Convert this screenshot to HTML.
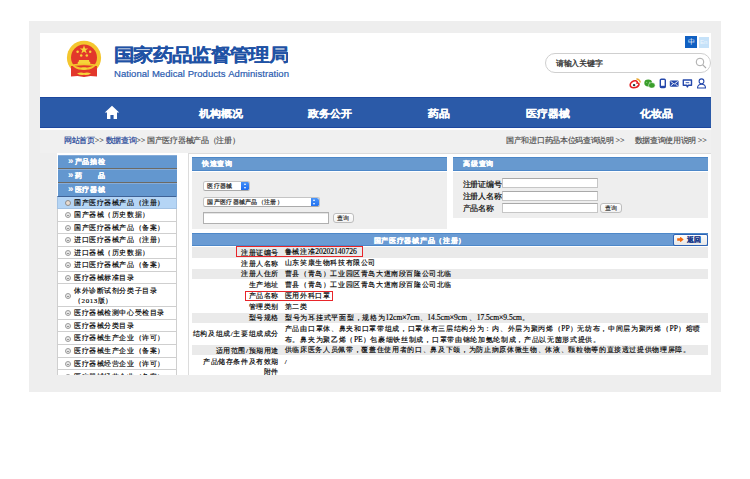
<!DOCTYPE html>
<html><head><meta charset="utf-8">
<style>
*{margin:0;padding:0;box-sizing:border-box}
html,body{width:750px;height:479px;overflow:hidden;background:#fff}
body{position:relative;font-family:"Liberation Serif",serif;color:#333;text-spacing-trim:space-all;font-kerning:none}
.a{position:absolute}
.s{font-family:"Liberation Sans",sans-serif}
.nw{white-space:nowrap}
#frame{left:28.8px;top:21px;width:692.2px;height:370.6px;background:#eeeeee}
#hdr{left:40px;top:33px;width:671px;height:64px;background:#fff}
#nav{left:40px;top:97px;width:671px;height:31px;background:#2b5aa8;border-top:1px solid #1c479e;border-bottom:1px solid #1c479e}
#navline{left:40px;top:128px;width:671px;height:1.5px;background:#fdfdfd}
#bc{left:40px;top:129.5px;width:671px;height:23.5px;background:#f0f0f0}
.nt{position:absolute;top:105.6px;height:14px;line-height:14px;transform:scaleY(0.92);transform-origin:0 50%;color:#fff;font-weight:bold;font-size:11px;letter-spacing:0px;white-space:nowrap;-webkit-text-stroke:0.25px #fff}
.bcx{font-size:8px;letter-spacing:-0.3px;line-height:11px;color:#4a4a4a;white-space:nowrap;-webkit-text-stroke:0.15px #4a4a4a}
.lnk{color:#2a4a9a;-webkit-text-stroke:0.2px #2a4a9a}
.gt{letter-spacing:0;font-size:8px}
.sb{position:absolute;left:0.5px;width:119.5px;height:14px;background:#6397cf;border-top:1.2px solid #85acd9;border-bottom:1.5px solid #6c6a64;color:#fff;font-weight:bold;font-size:7px;letter-spacing:0.6px;line-height:9.5px;padding-left:10.5px;white-space:nowrap;-webkit-text-stroke:0.2px #fff}
.si{position:absolute;left:0;width:120px;background:#fff;border:1px solid #cfcfcf;border-top:none;color:#000;font-size:7px;letter-spacing:0.58px;line-height:11.5px;padding-left:16px;padding-top:1.2px;white-space:nowrap;-webkit-text-stroke:0.15px #000}
.si.hl{background:#b5d5f5;border-color:#a3c2e3;border-top:1.2px solid #3f6296}
.si.two{line-height:10.6px;padding-top:1.3px}
.bu{position:absolute;left:7.2px;top:3.3px;width:6px;height:6px;border-radius:50%;border:0.9px solid #9c9c9c;background:#e8e8e8}
.hl .bu{background:#eadccf;border-color:#8c8c8c}
.hl .bu:after{display:none}
.bu:after{content:"";position:absolute;left:1px;right:1px;top:2px;height:0.8px;background:#999}
.ph{height:13.6px;background:#6799cf;border-top:1px solid #4c87c8;border-bottom:1px solid #4c87c8;color:#fff;font-weight:bold;font-size:7px;letter-spacing:0.65px;line-height:11.6px;padding-left:10.5px;white-space:nowrap;-webkit-text-stroke:0.2px #fff}
.pb{background:#eeeeee}
.sel{background:#fff;border:0.7px solid #c4c4c4;border-bottom-color:#aaa;border-radius:2.5px;font-size:6px;letter-spacing:0.3px;font-weight:bold;line-height:9px;padding-left:3.6px;color:#333;white-space:nowrap;overflow:hidden}
.ar{position:absolute;right:-0.7px;top:-0.7px;bottom:-0.7px;width:8.6px;background:linear-gradient(#4b95f8,#1c6cf0);border-radius:0 2.5px 2.5px 0}
.ar:before,.ar:after{content:"";position:absolute;left:2.6px;border-left:1.6px solid transparent;border-right:1.6px solid transparent}
.ar:before{top:1.6px;border-bottom:2px solid #fff}
.ar:after{bottom:1.6px;border-top:2px solid #fff}
.inp{background:#fff;border:0.8px solid #c6c6c6;border-top-color:#a9a9a9}
.btn{background:linear-gradient(#fff,#f2f2f2);border:0.8px solid #bdbdbd;border-radius:3px;font-size:6px;line-height:7.3px;text-align:center;color:#222;-webkit-text-stroke:0.1px #222}
.lbl{font-size:8px;letter-spacing:-0.1px;line-height:10px;color:#000;white-space:nowrap;-webkit-text-stroke:0.15px #000}
.rh{background:#6a9bd3;border-top:1px solid #4d88c9;border-bottom:1px solid #4d88c9}
.rht{color:#fff;font-weight:bold;font-size:7px;letter-spacing:0.72px;line-height:11px;white-space:nowrap;-webkit-text-stroke:0.2px #fff}
.back{background:linear-gradient(#fdfdfd,#e6e6e6);border:1.4px solid #2c62b4;border-radius:2px;color:#1a3a8a;font-weight:bold;font-size:7px;letter-spacing:0.4px;line-height:10px;padding-left:13px;white-space:nowrap;-webkit-text-stroke:0.2px #1a3a8a}
.arw{position:absolute;left:3.2px;top:2px;width:6.5px;height:5.8px;background:#f26a10;clip-path:polygon(0 30%,45% 30%,45% 0,100% 50%,45% 100%,45% 70%,0 70%)}
.tl{left:191.5px;width:87.5px;display:flex;align-items:center;justify-content:flex-end;text-align:right;font-size:7px;letter-spacing:0.6px;line-height:10.5px;padding-top:1.2px;color:#000;-webkit-text-stroke:0.15px #000;white-space:nowrap}
.tv{left:284.8px;width:425px;display:flex;align-items:center;font-size:7px;letter-spacing:0.6px;line-height:10.8px;padding-top:1.2px;color:#000;-webkit-text-stroke:0.15px #000;white-space:nowrap}
.rq{font-size:9.5px;letter-spacing:0;position:relative;top:0.8px;-webkit-text-stroke:0.1px #fff}
.ls0{letter-spacing:0;font-size:7.56px}
.rb{border:1.2px solid #e8252a}
</style></head><body>
<div id="frame" class="a"></div><div id="hdr" class="a"></div><div id="nav" class="a"></div><div id="navline" class="a"></div><div id="bc" class="a"></div>
<svg class="a" style="left:60px;top:36px" width="48" height="46" viewBox="60 36 48 46">
  <circle cx="84" cy="57.8" r="17.1" fill="#f4c62e"/>
  <circle cx="84" cy="57.6" r="13" fill="#e2372b"/>
  <path d="M71 66 L97 66 L97 76.5 L90.5 76 L84 77 L77.5 76 L71 76.5 Z" fill="#e2372b"/>
  <polygon points="84,45.3 85.1,48.4 88.3,48.4 85.7,50.3 86.7,53.4 84,51.5 81.3,53.4 82.3,50.3 79.7,48.4 82.9,48.4" fill="#f6d43a"/>
  <circle cx="77.6" cy="51.7" r="1.25" fill="#f6d43a"/>
  <circle cx="90.2" cy="51.7" r="1.25" fill="#f6d43a"/>
  <circle cx="81.2" cy="55.5" r="1.25" fill="#f6d43a"/>
  <circle cx="86.8" cy="55.5" r="1.25" fill="#f6d43a"/>
  <path d="M79 60 L89 60 L89.3 61.8 L90.2 62 L90.2 64.8 L77.8 64.8 L77.8 62 L78.7 61.8 Z" fill="#f6d43a"/>
  <path d="M71.5 64.5 Q84 62.5 96.5 64.5 Q92 70.5 84 69.6 Q76 70.5 71.5 64.5 Z M74.5 65.8 Q84 70 93.5 65.8 Q84 64.8 74.5 65.8 Z" fill="#f4c62e" fill-rule="evenodd"/>
  <ellipse cx="84" cy="68.6" rx="3" ry="1.4" fill="#f6d43a"/>
  <path d="M77 73.5 Q80.5 71.8 84 73 Q87.5 71.8 91 73.5 Q87.5 75.8 84 74.8 Q80.5 75.8 77 73.5 Z" fill="#f6d43a"/>
</svg>
<div id="title" class="a s nw" style="left:114px;top:43.8px;font-weight:bold;font-size:20px;letter-spacing:-0.67px;line-height:24px;color:#1f52a5;-webkit-text-stroke:0.2px #1f52a5;transform:scaleY(0.875);transform-origin:0 0">国家药品监督管理局</div>
<div id="entitle" class="a s nw" style="left:114px;top:67.9px;font-size:9.5px;letter-spacing:0.045px;line-height:12px;color:#2b5cb0;-webkit-text-stroke:0.2px #2b5cb0">National Medical Products Administration</div>
<div class="a s" style="left:685px;top:36.4px;width:12px;height:12px;background:#1060c2;color:#fff;font-size:7px;line-height:12px;text-align:center">中</div>
<div class="a s" style="left:698.6px;top:36.9px;width:10.2px;height:11.1px;background:#c6e2f9;color:#eef6fd;font-size:6px;line-height:11.1px;text-align:center">En</div>
<div class="a" style="left:545px;top:53px;width:166px;height:20px;border:1.1px solid #cfcfcf;border-radius:10px;background:#fff"></div>
<div class="a s nw" style="left:556px;top:58.7px;font-size:8px;letter-spacing:-0.3px;line-height:10px;color:#2a2a2a;-webkit-text-stroke:0.25px #2a2a2a">请输入关键字</div>
<svg class="a" style="left:695px;top:57px" width="12" height="12" viewBox="0 0 12 12"><circle cx="5" cy="5" r="3.8" fill="none" stroke="#aaa" stroke-width="1"/><path d="M7.8 7.8 L11 11" stroke="#aaa" stroke-width="1.1"/></svg>
<svg class="a" style="left:628px;top:78px" width="80" height="11" viewBox="0 0 80 11">
  <path d="M2.2 6.8 C2.2 4.4 5.2 2.6 7.6 2.8 C9.2 3 9.4 4.2 9.2 5 C10.6 4.9 11.4 5.9 10.8 7.2 C10 9 7.6 9.8 5.6 9.8 C3.4 9.8 2.2 8.5 2.2 6.8 Z" fill="#fff" stroke="#e41e20" stroke-width="1.6"/>
  <ellipse cx="6.1" cy="7" rx="2.9" ry="1.6" fill="#fff"/>
  <circle cx="6.1" cy="7.1" r="1.2" fill="#1f3b3a"/>
  <path d="M8.4 1 A3.6 3.6 0 0 1 12.2 4.6" stroke="#eaa830" stroke-width="1.5" fill="none"/>
  <ellipse cx="20.2" cy="5" rx="3.9" ry="3.4" fill="#3a9f2c"/>
  <ellipse cx="23.8" cy="7.3" rx="3.3" ry="2.8" fill="#3a9f2c" stroke="#fff" stroke-width="0.5"/>
  <circle cx="18.8" cy="4.2" r="0.45" fill="#dff0d8"/><circle cx="21.4" cy="4.2" r="0.45" fill="#dff0d8"/>
  <rect x="32.3" y="1.2" width="5" height="8.4" rx="1" fill="none" stroke="#2548ab" stroke-width="1.4"/>
  <rect x="32.3" y="7.8" width="5" height="1.8" fill="#2548ab"/>
  <rect x="41.8" y="2.5" width="8.8" height="6.2" rx="1" fill="#2548ab"/>
  <path d="M42.6 3.4 L46.2 6.1 L49.8 3.4 M42.6 8 L45 6 M49.8 8 L47.4 6" stroke="#fff" stroke-width="0.9" fill="none"/>
  <path d="M55.3 2 H63.5 V7.2 H60.3 L59.4 8.9 L58.5 7.2 H55.3 Z" fill="#fff" stroke="#2548ab" stroke-width="1.4" stroke-linejoin="round"/>
  <path d="M57.6 4.7 H61.2" stroke="#2548ab" stroke-width="0.9"/>
  <circle cx="73.5" cy="3.3" r="2.4" fill="none" stroke="#2548ab" stroke-width="1.1"/>
  <path d="M69.5 10 C69.5 7.4 71.3 6.3 73.5 6.3 C75.7 6.3 77.5 7.4 77.5 10 Z" fill="none" stroke="#2548ab" stroke-width="1.1" stroke-linejoin="round"/>
</svg>
<svg class="a" style="left:104px;top:105px" width="16" height="15" viewBox="0 0 16 15"><path d="M8 0.8 L15.2 7.5 L13 7.5 L13 14 L9.6 14 L9.6 10 L6.4 10 L6.4 14 L3 14 L3 7.5 L0.8 7.5 Z" fill="#fff"/></svg>
<div class="nt" style="left:199px">机构概况</div>
<div class="nt" style="left:307.5px">政务公开</div>
<div class="nt" style="left:428px">药品</div>
<div class="nt" style="left:526px">医疗器械</div>
<div class="nt" style="left:639.6px">化妆品</div>
<div class="a bcx" style="left:64px;top:135px"><span class="lnk">网站首页</span><span class="gt">&gt;&gt;</span> <span class="lnk">数据查询</span><span class="gt">&gt;&gt;</span> 国产医疗器械产品（注册）</div>
<div class="a bcx" style="left:506px;top:135px">国产和进口药品本位码查询说明 <span class="gt">&gt;&gt;</span></div>
<div class="a bcx" style="left:634.5px;top:135px">数据查询使用说明 <span class="gt">&gt;&gt;</span></div>
<div class="a" style="left:0;top:0;width:711px;height:375px;overflow:hidden">
<div class="a" style="left:57px;top:153px;width:700px;height:230px;background:#fff"></div>
<div class="a" style="left:188px;top:153px;width:530px;height:230px;border:1px solid #dcdcdc;background:#fff"></div>
<div class="a ph s" style="left:191.5px;top:157px;width:255.5px">快速查询</div>
<div class="a pb" style="left:191.5px;top:172px;width:255.3px;height:57px"></div>
<div class="a sel s" style="left:202.8px;top:180.8px;width:47.6px;height:10px">医疗器械<b class="ar"></b></div>
<div class="a sel s" style="left:202.8px;top:197.4px;width:116.8px;height:10px">国产医疗器械产品（注册）<b class="ar"></b></div>
<div class="a inp" style="left:202.5px;top:212.2px;width:126.3px;height:11.6px;border-color:#b0b0b0;box-shadow:inset 0 0.6px 0.6px #ccc"></div>
<div class="a btn s" style="left:332.8px;top:213.4px;width:20.8px;height:9.6px;line-height:8.6px">查询</div>
<div class="a ph s" style="left:452.8px;top:157px;width:255.5px">高级查询</div>
<div class="a pb" style="left:452.8px;top:172px;width:255.5px;height:45.6px"></div>
<div class="a lbl" style="left:462.5px;top:179.8px">注册证编号</div>
<div class="a lbl" style="left:462.5px;top:191.6px">注册人名称</div>
<div class="a lbl" style="left:462.5px;top:204px">产品名称</div>
<div class="a inp" style="left:502.2px;top:178px;width:95.4px;height:10px"></div>
<div class="a inp" style="left:502.2px;top:190.7px;width:95.4px;height:10px"></div>
<div class="a inp" style="left:502.2px;top:203.3px;width:95.4px;height:10px"></div>
<div class="a btn s" style="left:599.5px;top:203.1px;width:22.5px;height:10.4px;line-height:9px">查询</div>
<div class="a rh" style="left:191.5px;top:233.3px;width:516.5px;height:13.2px"></div>
<div class="a rht s" style="left:373.5px;top:234.5px">国产医疗器械产品（注册）</div>
<div class="a back s" style="left:673px;top:233.6px;width:34.8px;height:12.2px"><i class="arw"></i>返回</div>
<div class="a" style="left:191.5px;top:246.75px;width:516.5px;height:11.0px;background:#eaeaea"></div>
<div class="a" style="left:191.5px;top:268.6px;width:516.5px;height:10.65px;background:#eaeaea"></div>
<div class="a" style="left:191.5px;top:312.75px;width:516.5px;height:10.35px;background:#eaeaea"></div>
<div class="a" style="left:191.5px;top:345.0px;width:516.5px;height:10.3px;background:#eaeaea"></div>
<div class="a tl" style="top:246.75px;height:11.0px;"><div>注册证编号</div></div>
<div class="a tv" style="top:246.75px;height:11.0px;"><div>鲁械注准<span class=ls0>20202140726</span></div></div>
<div class="a tl" style="top:257.75px;height:10.85px;"><div>注册人名称</div></div>
<div class="a tv" style="top:257.75px;height:10.85px;"><div>山东笑康生物科技有限公司</div></div>
<div class="a tl" style="top:268.6px;height:10.65px;"><div>注册人住所</div></div>
<div class="a tv" style="top:268.6px;height:10.65px;"><div>曹县（青岛）工业园区青岛大道南段百隆公司北临</div></div>
<div class="a tl" style="top:279.25px;height:11.3px;"><div>生产地址</div></div>
<div class="a tv" style="top:279.25px;height:11.3px;"><div>曹县（青岛）工业园区青岛大道南段百隆公司北临</div></div>
<div class="a tl" style="top:290.55px;height:10.7px;"><div>产品名称</div></div>
<div class="a tv" style="top:290.55px;height:10.7px;"><div>医用外科口罩</div></div>
<div class="a tl" style="top:301.25px;height:11.5px;"><div>管理类别</div></div>
<div class="a tv" style="top:301.25px;height:11.5px;"><div>第二类</div></div>
<div class="a tl" style="top:312.75px;height:10.35px;"><div>型号规格</div></div>
<div class="a tv" style="top:312.75px;height:10.35px;letter-spacing:0.75px"><div>型号为耳挂式平面型，规格为<span class=ls0>12cm×7cm</span>、<span class=ls0>14.5cm×9cm </span>、<span class=ls0>17.5cm×9.5cm</span>。</div></div>
<div class="a tl" style="top:323.1px;height:21.9px;"><div>结构及组成/主要组成成分</div></div>
<div class="a tv" style="top:323.1px;height:21.9px;letter-spacing:0.68px"><div>产品由口罩体、鼻夹和口罩带组成，口罩体有三层结构分为：内、外层为聚丙烯（<span class=ls0>PP</span>）无纺布，中间层为聚丙烯（<span class=ls0>PP</span>）熔喷<br>布。鼻夹为聚乙烯（<span class=ls0>PE</span>）包裹细铁丝制成，口罩带由锦纶加氨纶制成，产品以无菌形式提供。</div></div>
<div class="a tl" style="top:345.0px;height:10.3px;"><div>适用范围/预期用途</div></div>
<div class="a tv" style="top:345.0px;height:10.3px;letter-spacing:0.66px"><div>供临床医务人员佩带，覆盖住使用者的口、鼻及下颌，为防止病原体微生物、体液、颗粒物等的直接透过提供物理屏障。</div></div>
<div class="a tl" style="top:355.3px;height:22px;align-items:flex-start;padding-top:1.5px"><div>产品储存条件及有效期<br>附件</div></div>
<div class="a tv" style="top:355.3px;height:22px;align-items:flex-start;padding-top:2px"><div>/</div></div>
<div class="a rb" style="left:236.2px;top:246px;width:127px;height:10.6px"></div>
<div class="a rb" style="left:245.3px;top:290.8px;width:87.8px;height:9.8px"></div>
<div class="a" style="left:57px;top:154px;width:120px;height:221px;overflow:hidden">
<div class="sb s" style="top:0.5px"><span class="rq">»</span><span style="margin-left:1.6px">产品抽检</span></div>
<div class="sb s" style="top:14.5px"><span class="rq">»</span><span style="margin-left:1.6px">药<span style="margin-left:15.6px">品</span></span></div>
<div class="sb s" style="top:28.5px"><span class="rq">»</span><span style="margin-left:1.6px">医疗器械</span></div>
<div class="si hl" style="top:42.0px;height:13px"><i class="bu"></i>国产医疗器械产品（注册）</div>
<div class="si" style="top:55.0px;height:12.55px"><i class="bu"></i>国产器械（历史数据）</div>
<div class="si" style="top:67.55px;height:12.55px"><i class="bu"></i>国产医疗器械产品（备案）</div>
<div class="si" style="top:80.1px;height:12.55px"><i class="bu"></i>进口医疗器械产品（注册）</div>
<div class="si" style="top:92.64999999999999px;height:12.55px"><i class="bu"></i>进口器械（历史数据）</div>
<div class="si" style="top:105.19999999999999px;height:12.55px"><i class="bu"></i>进口医疗器械产品（备案）</div>
<div class="si" style="top:117.74999999999999px;height:12.55px"><i class="bu"></i>医疗器械标准目录</div>
<div class="si two" style="top:130.29999999999998px;height:22.6px"><i class="bu" style="top:8.5px"></i>体外诊断试剂分类子目录<br>（2013版）</div>
<div class="si" style="top:152.89999999999998px;height:12.7px"><i class="bu"></i>医疗器械检测中心受检目录</div>
<div class="si" style="top:165.59999999999997px;height:12.7px"><i class="bu"></i>医疗器械分类目录</div>
<div class="si" style="top:178.29999999999995px;height:12.7px"><i class="bu"></i>医疗器械生产企业（许可）</div>
<div class="si" style="top:190.99999999999994px;height:12.7px"><i class="bu"></i>医疗器械生产企业（备案）</div>
<div class="si" style="top:203.69999999999993px;height:12.7px"><i class="bu"></i>医疗器械经营企业（许可）</div>
<div class="si" style="top:216.39999999999992px;height:12.7px"><i class="bu"></i>医疗器械经营企业（备案）</div>
</div>
</div>
</body></html>
